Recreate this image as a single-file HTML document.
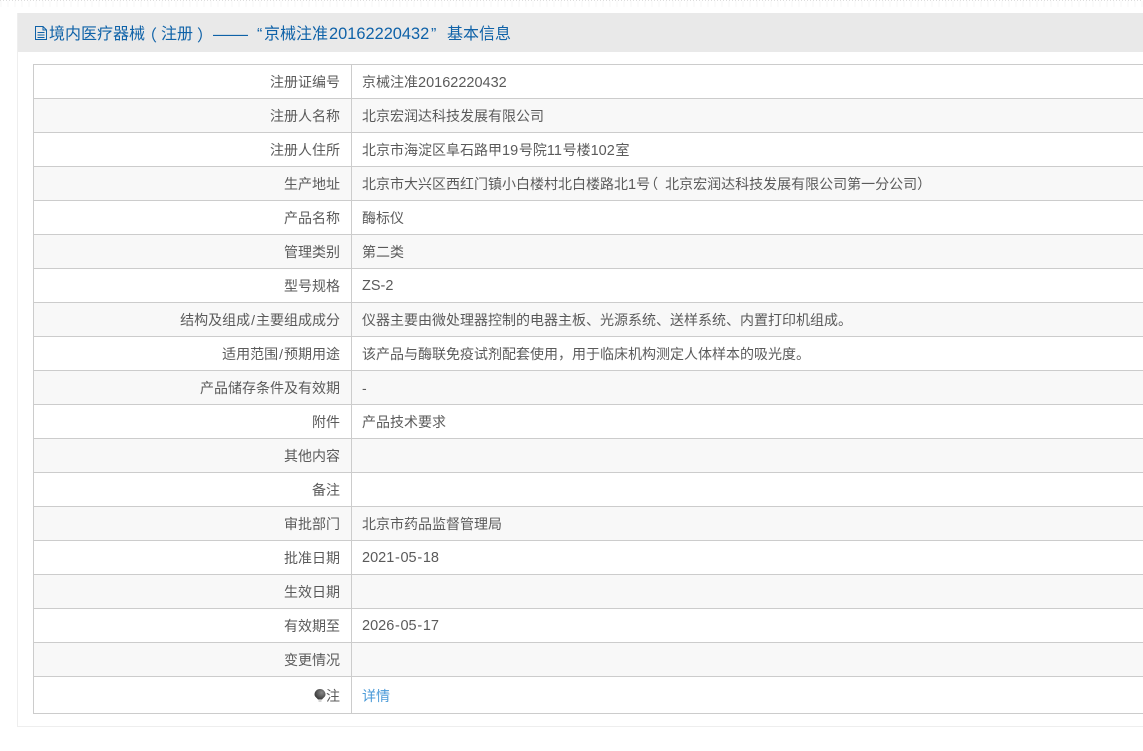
<!DOCTYPE html>
<html lang="zh"><head><meta charset="utf-8"><title>基本信息</title>
<style>
html,body{margin:0;padding:0;width:1143px;height:751px;overflow:hidden;background:#fff}
body{position:relative;font-family:"Liberation Sans","Noto Sans CJK SC",sans-serif;font-size:14px;color:#5a5a5a}
.dots{position:absolute;left:0;top:0;width:1143px;height:1px;background:repeating-linear-gradient(90deg,#ddd 0 1px,#fff 1px 3px)}
.dots2{position:absolute;left:0;top:1px;width:1143px;height:6px;background:repeating-linear-gradient(90deg,#fbfbfb 0 2px,#fff 2px 7px)}
.panel{position:absolute;left:17px;top:13px;width:1126px;height:713px;border-left:1px solid #eee;border-bottom:1px solid #eee;box-sizing:content-box}
.head{position:absolute;left:18px;top:13px;width:1125px;height:39px;background:#e9e9e9}
.t{position:absolute;top:16px;height:39px;line-height:37px;font-size:16px;color:#0f62a8;white-space:nowrap}
.tc{font-family:"Noto Sans CJK TC",sans-serif}
.ic{position:absolute;left:34px;top:26px}
.tb{position:absolute;left:33px;top:64px;width:1110px;height:650px;border-left:1px solid #ccc;border-top:1px solid #ccc;border-bottom:1px solid #ccc;box-sizing:border-box}
.r{position:absolute;left:34px;width:1109px;height:33px;border-bottom:1px solid #ccc;line-height:35px}
.r.a{background:#f8f8f8}
.l{position:absolute;left:0;width:306px;text-align:right;white-space:nowrap}
.v{position:absolute;left:328px;white-space:nowrap}
.n{font-size:14.500px}
.m{margin-right:.7px}
.h{margin:0 .7px}
.s{margin:0 1px}
.p{font-family:"Noto Sans CJK TC",sans-serif}
.sep{position:absolute;left:351px;top:65px;width:1px;height:648px;background:#ccc}
a{color:#4a9ad8;text-decoration:none}
.bulb{position:absolute;left:314px;top:689px}
</style></head><body>
<div class="dots"></div>
<div class="dots2"></div>
<div class="panel"></div>
<div class="head"></div>
<svg class="ic" width="14" height="14" viewBox="0 0 14 14" fill="none" stroke="#0f62a8" stroke-width="1"><path d="M1.500 .5H9L12.500 4V13.500H1.500ZM9 .5V4H12.500M3.500 6.500H10.500M3.500 9H10.500M3.500 11.500H10.500"/></svg>
<div class="t" style="left:49px">境内医疗器械</div>
<div class="t tc" style="left:141px">（</div>
<div class="t" style="left:161px">注册</div>
<div class="t tc" style="left:197px">）</div>
<div class="t" style="left:213px;font-size:17.500px">——</div>
<div class="t" style="left:257px">“</div>
<div class="t" style="left:264px">京械注准</div>
<div class="t" style="left:329px;font-size:16.400px">20162220432</div>
<div class="t" style="left:431px">”</div>
<div class="t" style="left:447px">基本信息</div>
<div class="tb"></div>
<div class="r" style="top:65px"><span class="l">注册证编号</span><span class="v">京械注准<span class="n">20162220432</span></span></div>
<div class="r a" style="top:99px"><span class="l">注册人名称</span><span class="v">北京宏润达科技发展有限公司</span></div>
<div class="r" style="top:133px"><span class="l">注册人住所</span><span class="v">北京市海淀区阜石路甲<span class="n m">19</span>号院<span class="n m">11</span>号楼<span class="n m">102</span>室</span></div>
<div class="r a" style="top:167px"><span class="l">生产地址</span><span class="v">北京市大兴区西红门镇小白楼村北白楼路北<span class="n">1</span>号<span class="p" style="margin:0 7px 0 -6px">（</span>北京宏润达科技发展有限公司第一分公司<span class="p">）</span></span></div>
<div class="r" style="top:201px"><span class="l">产品名称</span><span class="v">酶标仪</span></div>
<div class="r a" style="top:235px"><span class="l">管理类别</span><span class="v">第二类</span></div>
<div class="r" style="top:269px"><span class="l">型号规格</span><span class="v n">ZS-2</span></div>
<div class="r a" style="top:303px"><span class="l">结构及组成<span class="s">/</span>主要组成成分</span><span class="v">仪器主要由微处理器控制的电器主板、光源系统、送样系统、内置打印机组成。</span></div>
<div class="r" style="top:337px"><span class="l">适用范围<span class="s">/</span>预期用途</span><span class="v">该产品与酶联免疫试剂配套使用，用于临床机构测定人体样本的吸光度。</span></div>
<div class="r a" style="top:371px"><span class="l">产品储存条件及有效期</span><span class="v">-</span></div>
<div class="r" style="top:405px"><span class="l">附件</span><span class="v">产品技术要求</span></div>
<div class="r a" style="top:439px"><span class="l">其他内容</span></div>
<div class="r" style="top:473px"><span class="l">备注</span></div>
<div class="r a" style="top:507px"><span class="l">审批部门</span><span class="v">北京市药品监督管理局</span></div>
<div class="r" style="top:541px"><span class="l">批准日期</span><span class="v n">2021<span class="h">-</span>05<span class="h">-</span>18</span></div>
<div class="r a" style="top:575px"><span class="l">生效日期</span></div>
<div class="r" style="top:609px"><span class="l">有效期至</span><span class="v n">2026<span class="h">-</span>05<span class="h">-</span>17</span></div>
<div class="r a" style="top:643px"><span class="l">变更情况</span></div>
<div class="r" style="top:677px;height:36px;border-bottom:0;line-height:39px"><span class="l">注</span><span class="v"><a>详情</a></span></div>
<svg class="bulb" width="12" height="13" viewBox="0 0 12 13"><defs><radialGradient id="g" cx=".65" cy=".35" r=".8"><stop offset="0" stop-color="#888"/><stop offset="1" stop-color="#2a2a2a"/></radialGradient></defs><path d="M6 0A5.500 5.500 0 0 1 11.500 5.500C11.500 7.800 9 9 8 10.500H4C3 9 .5 7.800 .5 5.500A5.500 5.500 0 0 1 6 0Z" fill="url(#g)"/><path d="M4.500 12H7.500" stroke="#aaa" stroke-width="1"/></svg>
<div class="sep"></div>
</body></html>
